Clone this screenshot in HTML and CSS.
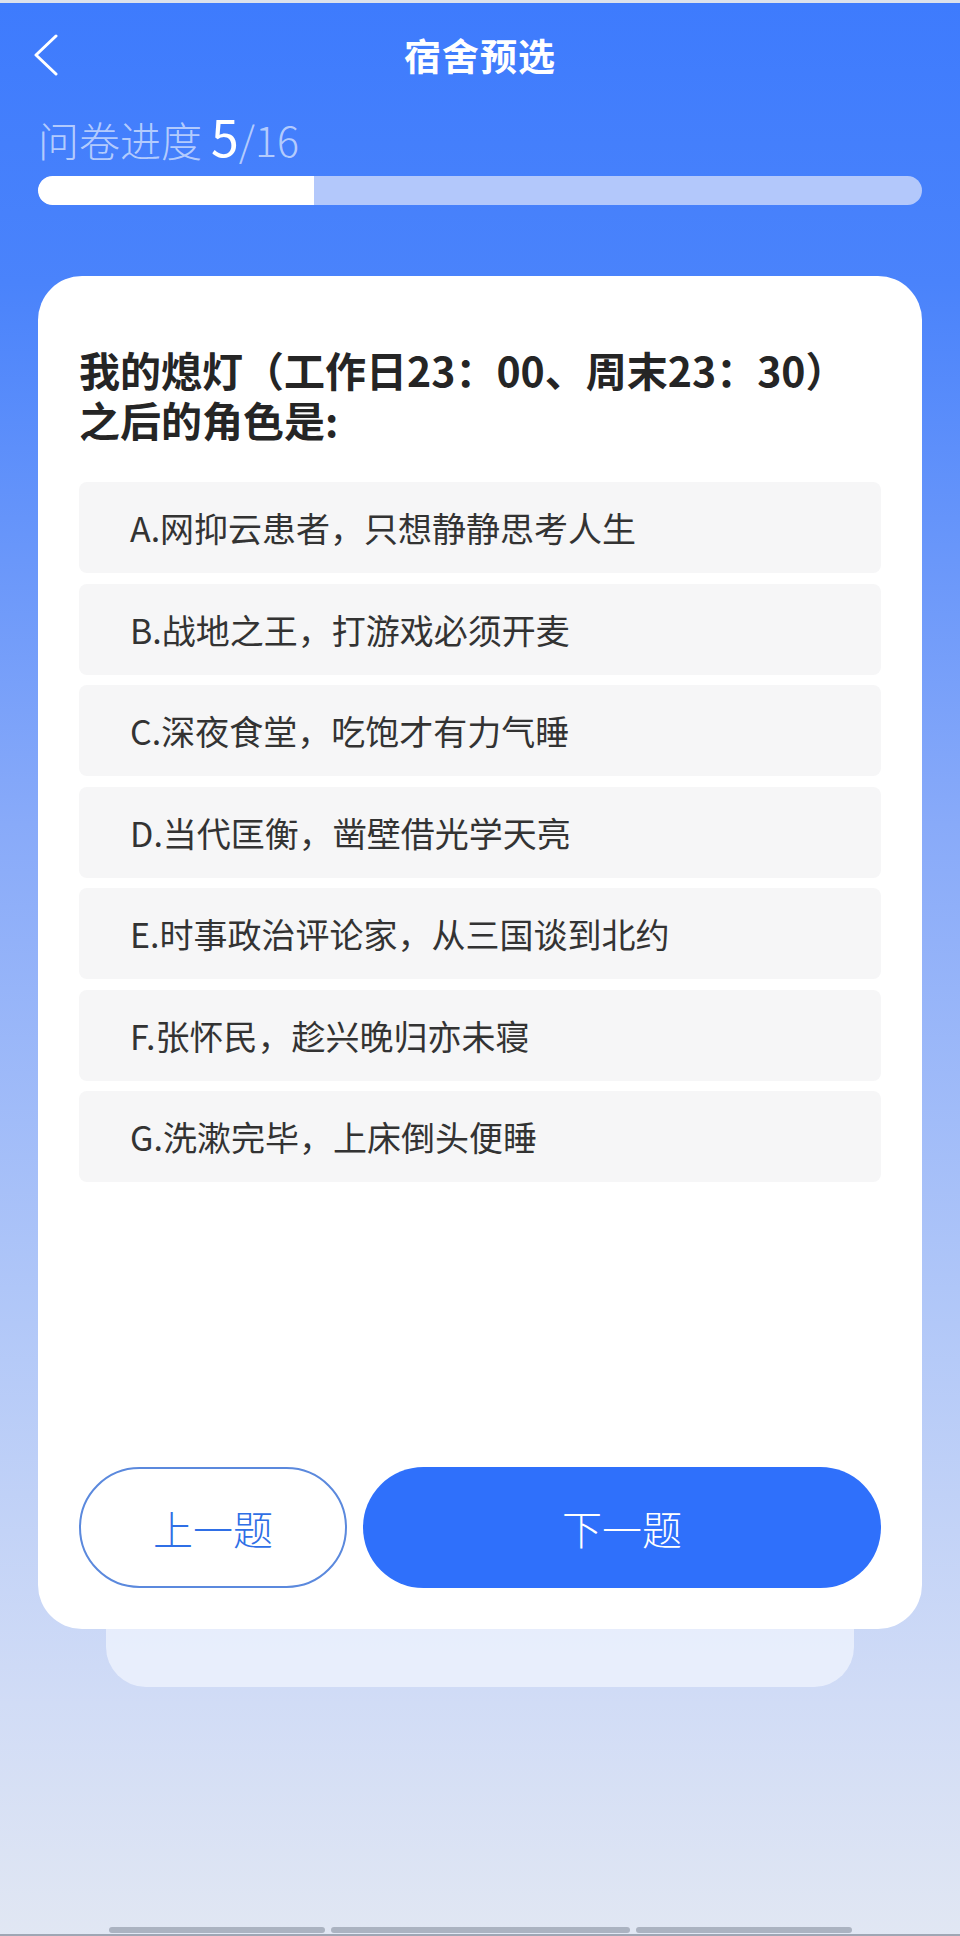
FILE: index.html
```html
<!DOCTYPE html>
<html lang="zh-CN">
  <head>
    <meta charset="UTF-8" />
    <meta name="viewport" content="width=device-width, initial-scale=1.0" />
    <title>宿舍预选</title>
    <link rel="stylesheet" href="styles.css">
  </head>
  <body>
    <div class="page">
      <!-- 顶部导航 -->
      <header class="header">
        <a class="back" href="#">
          <svg width="26" height="42" viewBox="0 0 26 42">
            <polyline points="23,2 3,21 23,40" fill="none" stroke="#fff" stroke-width="3" stroke-linecap="round" stroke-linejoin="round" />
          </svg>
        </a>
        <h1 class="title">宿舍预选</h1>
        <span></span>
      </header>

      <!-- 进度 -->
      <div class="progress">
        <p class="progress-label">问卷进度 <b>5</b>/16</p>
        <div class="progress-track">
          <div class="progress-fill" style="width: 31.25%"></div>
        </div>
      </div>

      <!-- 题目卡片 -->
      <section class="card">
        <h2 class="question">
          <span class="q-line">我的熄灯（工作日23：00、周末23：30）</span>
          <span class="q-line">之后的角色是:</span>
        </h2>
        <ul class="options">
          <li>A.网抑云患者，只想静静思考人生</li>
          <li>B.战地之王，打游戏必须开麦</li>
          <li>C.深夜食堂，吃饱才有力气睡</li>
          <li>D.当代匡衡，凿壁借光学天亮</li>
          <li>E.时事政治评论家，从三国谈到北约</li>
          <li>F.张怀民，趁兴晚归亦未寝</li>
          <li>G.洗漱完毕，上床倒头便睡</li>
        </ul>
        <div class="actions">
          <button class="btn btn-prev">上一题</button>
          <button class="btn btn-next">下一题</button>
        </div>
      </section>
      <div class="card-back"></div>

      <!-- 底部指示条 -->
      <div class="home-bar">
        <span class="seg seg-s"></span>
        <span class="seg seg-l"></span>
        <span class="seg seg-s"></span>
      </div>
    </div>
  </body>
</html>
```

FILE: styles.css
```css
* {
  margin: 0;
  padding: 0;
  box-sizing: border-box;
}
html,
body {
  font-family: "Noto Sans CJK SC", "Noto Sans", sans-serif;
  background-color: #e1e7f3;
}
ul,
li {
  list-style: none;
}
a {
  display: block;
  text-decoration: none;
}
.page {
  display: flex;
  flex-direction: column;
  width: 960px;
  height: 1936px;
  overflow: hidden;
  border-top: 3px solid #dce2ec;
  border-bottom: 2px solid #9ea6b4;
  background: linear-gradient(
    180deg,
    #3e7bfd 0px,
    #4a83fb 280px,
    #88aaf9 820px,
    #b2c8f8 1320px,
    #d1dcf6 1700px,
    #e1e7f3 1936px
  );
}
.header {
  display: grid;
  grid-template-columns: 1fr auto 1fr;
  align-items: center;
  height: 104px;
  padding: 0 33px;
}
.back {
  width: 26px;
  height: 42px;
}
.title {
  font-size: 37px;
  font-weight: bold;
  color: #fff;
  letter-spacing: 1px;
}
.progress {
  padding: 0 38px;
}
.progress-label {
  height: 46px;
  margin-top: 9px;
  font-size: 41px;
  line-height: 46px;
  font-weight: 300;
  color: rgba(255, 255, 255, 0.62);
}
.progress-label b {
  font-size: 50px;
  line-height: 0;
  font-weight: 400;
  color: #fff;
}
.progress-track {
  margin-top: 14px;
  height: 29px;
  border-radius: 15px;
  background-color: #b3c8fb;
  overflow: hidden;
}
.progress-fill {
  height: 100%;
  border-radius: 15px 0 0 15px;
  background-color: #fff;
}
.card {
  display: flex;
  flex-direction: column;
  height: 1353px;
  margin: 71px 38px 0;
  padding: 68px 41px 41px;
  border-radius: 44px;
  background-color: #fff;
}
.question {
  font-size: 41px;
  line-height: 50px;
  font-weight: bold;
  color: #252525;
}
.q-line {
  display: block;
  height: 50px;
}
.options {
  display: flex;
  flex-direction: column;
  gap: 10.5px;
  margin-top: 38px;
}
.options li {
  display: flex;
  align-items: center;
  height: 91px;
  padding-left: 51px;
  border-radius: 8px;
  background-color: #f6f6f7;
  font-size: 34px;
  color: #333;
}
.actions {
  display: flex;
  gap: 16px;
  margin-top: auto;
}
.btn {
  height: 121px;
  border-radius: 61px;
  font-family: "Noto Sans CJK SC", sans-serif;
  font-size: 40px;
  font-weight: 300;
  cursor: pointer;
}
.btn-prev {
  width: 268px;
  border: 2px solid #5b89dd;
  background-color: #fff;
  color: #2f6fe6;
}
.btn-next {
  flex: 1;
  border: none;
  background-color: #2f70fb;
  color: #fff;
}
.card-back {
  height: 58px;
  margin: 0 106px 0;
  border-radius: 0 0 40px 40px;
  background-color: rgba(240, 244, 253, 0.75);
}
.home-bar {
  display: flex;
  justify-content: center;
  gap: 6px;
  margin-top: auto;
  margin-bottom: 1px;
}
.seg {
  height: 6px;
  border-radius: 3px;
  background-color: #abb3c1;
}
.seg-s {
  width: 216px;
}
.seg-l {
  width: 299px;
}
```
